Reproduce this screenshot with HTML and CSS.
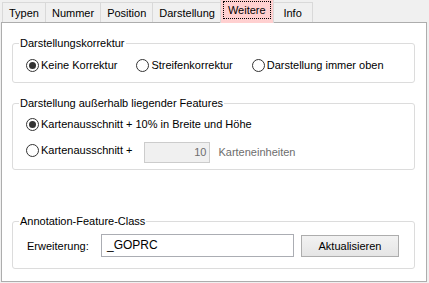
FILE: index.html
```html
<!DOCTYPE html>
<html lang="de">
  <head>
    <meta charset="utf-8" />
    <title>Weitere</title>
    <link rel="stylesheet" href="styles.css">
  </head>
  <body>
    <div class="tabs">
      <div class="tab">Typen</div>
      <div class="tab">Nummer</div>
      <div class="tab">Position</div>
      <div class="tab">Darstellung</div>
      <div class="tab active"><span class="focus">Weitere</span></div>
      <div class="tab tab-info">Info</div>
    </div>

    <div class="panel">
      <fieldset class="group group-correction">
        <legend>Darstellungskorrektur</legend>
        <div class="row">
          <label class="option"><span class="radio checked"></span>Keine Korrektur</label>
          <label class="option"><span class="radio"></span>Streifenkorrektur</label>
          <label class="option"><span class="radio"></span>Darstellung immer oben</label>
        </div>
      </fieldset>

      <fieldset class="group group-outside">
        <legend>Darstellung außerhalb liegender Features</legend>
        <div class="row">
          <label class="option"><span class="radio checked"></span>Kartenausschnitt + 10% in Breite und Höhe</label>
        </div>
        <div class="row row-extent">
          <label class="option"><span class="radio"></span>Kartenausschnitt +</label>
          <div class="textbox disabled number">10</div>
          <span class="units">Karteneinheiten</span>
        </div>
      </fieldset>

      <fieldset class="group group-annotation">
        <legend>Annotation-Feature-Class</legend>
        <div class="row row-suffix">
          <span class="field-label">Erweiterung:</span>
          <div class="textbox suffix">_GOPRC</div>
          <button type="button" class="btn">Aktualisieren</button>
        </div>
      </fieldset>
    </div>
  </body>
</html>
```

FILE: styles.css
```css
body {
  margin: 0;
  width: 429px;
  height: 283px;
  background-color: #f0f0f0;
  font-family: "Liberation Sans", Arial, sans-serif;
  font-size: 11px;
  color: #000;
  overflow: hidden;
}

/* tab strip */
.tabs {
  display: flex;
  align-items: flex-end;
  height: 22px;
  padding-left: 2px;
}
.tab {
  height: 19px;
  line-height: 20px;
  padding: 0 6px;
  border: 1px solid #d9d9d9;
  border-bottom: 0;
  margin-right: -1px;
  background-color: #f0f0f0;
  text-align: center;
}
.tab-info {
  min-width: 26px;
}
.tab.active {
  position: relative;
  z-index: 1;
  height: 22px;
  margin: 0 -1px -1px -1px;
  padding: 2px 2px 0;
  line-height: normal;
  background-color: #ffd0d0;
  border-color: #d9d9d9;
}
.focus {
  display: block;
  height: 16px;
  line-height: 17px;
  padding: 0 4px;
  border: 1px dotted #000;
}

/* page */
.panel {
  box-sizing: border-box;
  width: 426px;
  height: 260px;
  margin-left: 1px;
  background-color: #fff;
  border: 1px solid #adadad;
}

.group {
  margin: 0 11px 0 10px;
  padding: 0 0 0 6px;
  border: 1px solid #dcdcdc;
  border-radius: 3px;
}
.group legend {
  padding: 0 1px;
  line-height: 14px;
}
.group-correction {
  margin-top: 13px;
  padding-bottom: 9px;
}
.group-correction .row {
  margin-top: 7px;
}
.group-outside {
  margin-top: 13px;
  padding-bottom: 6px;
}
.group-outside .row {
  margin-top: 6px;
}
.group-outside .row-extent {
  margin-top: 10px;
}
.group-annotation {
  margin-top: 44px;
  padding-bottom: 11px;
}
.group-annotation .row {
  margin-top: 6px;
}

.row {
  display: flex;
  align-items: center;
  gap: 19px;
  padding-left: 7px;
}
.row-extent {
  align-items: flex-start;
  gap: 0;
}

.option {
  display: flex;
  align-items: center;
  height: 16px;
}
.radio {
  position: relative;
  box-sizing: border-box;
  width: 13px;
  height: 13px;
  margin-right: 2px;
  border: 1px solid #333;
  border-radius: 50%;
  background-color: #fff;
}
.radio.checked::after {
  content: "";
  position: absolute;
  left: 2px;
  top: 2px;
  width: 7px;
  height: 7px;
  border-radius: 50%;
  background-color: #333;
}

.textbox {
  box-sizing: border-box;
  height: 21px;
  line-height: 19px;
  padding: 0 3px;
  border: 1px solid #abadb3;
  background-color: #fff;
  font-size: 12px;
}
.textbox.disabled {
  background-color: #f0f0f0;
  border-color: #ccc;
  color: #6d6d6d;
}
.number {
  width: 66px;
  margin-left: 12px;
  text-align: right;
  font-size: 11px;
}
.units {
  margin-left: 8px;
  line-height: 21px;
  color: #6d6d6d;
}

.field-label {
  width: 74px;
  padding-left: 1px;
}
.row-suffix {
  gap: 0;
}
.suffix {
  width: 193px;
  height: 23px;
  line-height: 21px;
  padding-left: 5px;
  font-size: 12px;
}
.btn {
  box-sizing: border-box;
  width: 98px;
  height: 22px;
  margin: 1px 0 0 7px;
  padding: 0;
  border: 1px solid #adadad;
  background: linear-gradient(#f2f2f2, #e5e5e5);
  font-family: inherit;
  font-size: 11px;
  color: #000;
}
```
